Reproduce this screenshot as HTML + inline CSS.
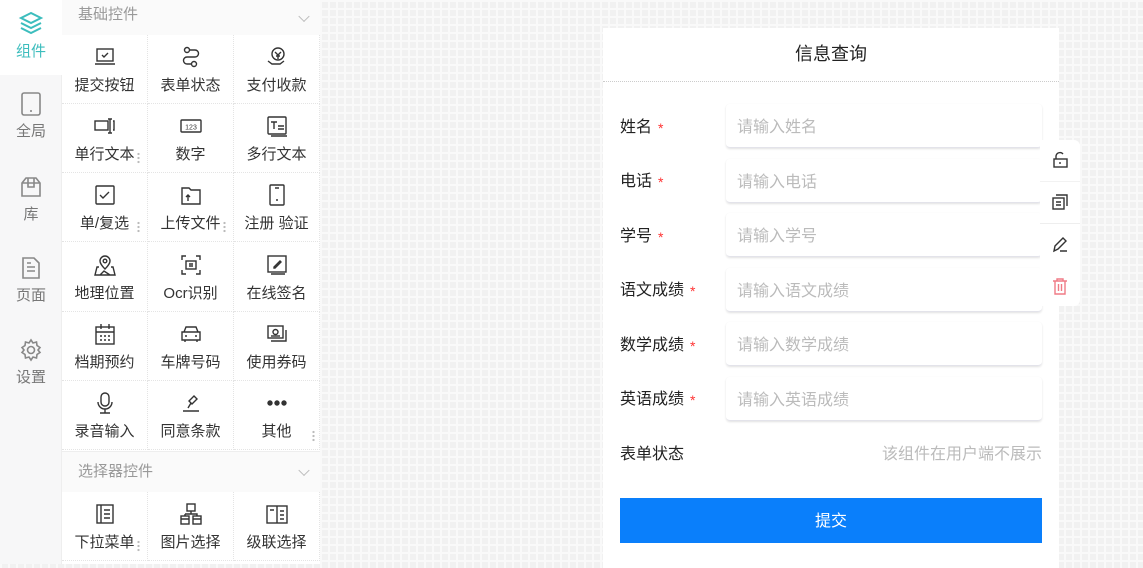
<!DOCTYPE html>
<html><head><meta charset="utf-8">
<style>
*{margin:0;padding:0;box-sizing:border-box}
body{width:1143px;height:564px;overflow:hidden;position:relative;font-family:"Liberation Sans","Noto Sans CJK SC",sans-serif;font-size:14px;color:#333;
background-color:#f1f1f1;background-image:linear-gradient(#f9f9f9 2px,transparent 2px),linear-gradient(90deg,#f9f9f9 2px,transparent 2px);background-size:8px 8px}
.rail{position:absolute;left:0;top:0;width:62px;height:564px;background:#f7f7f8;border-right:1px solid #eee}
.tab{position:absolute;left:0;width:62px;text-align:center;color:#777;font-size:15px}
.tab svg{display:block;margin:0 auto 4px}
.panel{position:absolute;left:62px;top:0;width:258px;height:564px;background:#fff}
.hd{position:absolute;left:0;width:258px;background:#fafafa;color:#999;font-size:15px;padding-left:16px}
.hd::after{content:"";position:absolute;right:12px;top:50%;width:7px;height:7px;border-right:1px solid #bbb;border-bottom:1px solid #bbb;transform:translateY(-70%) rotate(45deg)}
.cell{position:absolute;width:86px;height:69px;border-right:1px dotted #e4e4e4;border-bottom:1px dotted #e4e4e4;text-align:center}
.cell svg{position:absolute;left:32px;top:11px}
.cell span{position:absolute;left:0;right:0;top:39px;font-size:15px;color:#333}
.dots{position:absolute;width:3px;height:12px;background:radial-gradient(circle,#bbb 1px,transparent 1.3px) 0 0/3px 4px}
.card{position:absolute;left:603px;top:28px;width:456px;height:540px;background:#fff}
.title{height:54px;line-height:52px;text-align:center;font-size:18px;color:#222;border-bottom:1px dotted #ccc}
.lab{position:absolute;left:17px;font-size:16px;color:#222;line-height:20px}
.lab i{color:#f33;font-style:normal;margin-left:6px;font-size:14px;vertical-align:top}
.inp{position:absolute;left:123px;width:316px;height:44px;border-radius:4px;box-shadow:0 1px 2px rgba(0,0,0,.12);color:#bbb;padding-left:11px;line-height:48px;font-size:16px;border-bottom:1px solid #e3e3ea}
.btn{position:absolute;left:17px;top:470px;width:422px;height:45px;background:#0a7ffb;color:#fff;text-align:center;line-height:47px;font-size:16px}
.tool{position:absolute;left:1040px;top:140px;width:40px;height:166px;background:#fff;border-radius:0 6px 6px 0}
.tool svg{position:absolute;left:12px}
</style></head><body>
<div class="rail">
 <div class="tab" style="top:0;height:75px;background:#fff;color:#3cbdbd;padding-top:10px">
  <svg width="26" height="26" viewBox="0 0 26 26" fill="none" stroke="#3cbdbd" stroke-width="2"><path d="M13 3 3 8l10 5 10-5z"/><path d="M3 13l10 5 10-5"/><path d="M3 18l10 5 10-5"/></svg>组件</div>
 <div class="tab" style="top:92px"><svg width="22" height="24" viewBox="0 0 22 24" fill="none" stroke="#888" stroke-width="1.6"><rect x="2" y="1" width="18" height="22" rx="2"/><path d="M10 19h2"/></svg>全局</div>
 <div class="tab" style="top:175px"><svg width="24" height="24" viewBox="0 0 24 24" fill="none" stroke="#888" stroke-width="1.6"><path d="M3 8l4-5h10l4 5v13H3z M3 8h18 M9 3v9h6V3"/></svg>库</div>
 <div class="tab" style="top:256px"><svg width="22" height="24" viewBox="0 0 22 24" fill="none" stroke="#888" stroke-width="1.6"><path d="M3 2h11l5 5v15H3z M7 11h8M7 15h8M7 7h4"/></svg>页面</div>
 <div class="tab" style="top:338px"><svg width="24" height="24" viewBox="0 0 24 24" fill="none" stroke="#888" stroke-width="1.6"><circle cx="12" cy="12" r="3.5"/><path d="M12 2l2 3 3.5-1 .5 3.5 3 2-2 2.5 2 2.5-3 2-.5 3.5-3.5-1-2 3-2-3-3.5 1-.5-3.5-3-2 2-2.5-2-2.5 3-2L6.5 4 10 5z"/></svg>设置</div>
</div>
<div class="panel">
 <div class="hd" style="top:0;height:35px;line-height:30px">基础控件</div>
 <div class="hd" style="top:451px;height:41px;line-height:40px;border-top:1px solid #eee">选择器控件</div>
</div>
<div id="cells"></div>
<script>
var S='fill="none" stroke="#333" stroke-width="1.4"';
var ic={
a:'<rect x="3" y="3" width="16" height="12"/><path d="M1 18h20M8 9l2 2 4-4"/>',
b:'<circle cx="7" cy="4" r="2.5"/><circle cx="14" cy="18" r="2.5"/><path d="M9.5 4H15a3.5 3.5 0 010 7H7a3.5 3.5 0 000 7h4.5"/>',
c:'<circle cx="12" cy="8" r="6"/><path d="M9 6l3 3 3-3M12 9v4M10 10h4M2 15l4 3h8l4-3"/>',
d:'<rect x="1" y="6" width="13" height="9"/><path d="M16 4v14M14 4h4M14 18h4M19 6h1v9h-1"/>',
e:'<rect x="1" y="5" width="20" height="12" rx="1"/><text x="11" y="14.5" font-size="7" text-anchor="middle" fill="#333" stroke="none" font-family="Liberation Sans">123</text>',
f:'<rect x="2" y="2" width="18" height="17" rx="1"/><path d="M5 7h6M8 7v7M12 11h6M12 14h6M5 21h16"/>',
g:'<rect x="2" y="2" width="18" height="18" rx="1"/><path d="M6 11l3 3 6-6"/>',
h:'<path d="M2 4h7l2 2h9v14H2z"/><path d="M8 17v-6M6 13l2-2 2 2"/>',
i:'<rect x="4" y="1" width="14" height="20" rx="1"/><path d="M10 16h2M9 4h4"/>',
j:'<path d="M11 15s-5-5-5-8a5 5 0 0110 0c0 3-5 8-5 8z"/><circle cx="11" cy="7" r="1.8"/><path d="M5 13H3l-2 8h20l-2-8h-2M6 21l4-4 6 4"/>',
k:'<path d="M2 6V2h4M16 2h4v4M20 16v4h-4M6 20H2v-4"/><rect x="6" y="7" width="10" height="8"/><path d="M9 10h4M9 12h4"/>',
l:'<rect x="2" y="2" width="18" height="16"/><path d="M8 13l6-6 1 1-6 6H8zM5 20h14"/>',
m:'<rect x="2" y="4" width="18" height="17"/><path d="M2 9h18M7 1v5M15 1v5M6 13h2M10 13h2M14 13h2M6 17h2M10 17h2M14 17h2"/>',
n:'<path d="M4 9l2-5h10l2 5M2 9h18v8H2zM5 17v2M17 17v2M5 13h2M15 13h2"/>',
o:'<rect x="2" y="3" width="15" height="12"/><path d="M5 18h15V7"/><circle cx="9.5" cy="9" r="2.5"/><path d="M5 13h9"/>',
p:'<rect x="7" y="1" width="8" height="13" rx="4"/><path d="M4 10a7 7 0 0014 0M11 17v4M6 21h10"/>',
q:'<path d="M9 9l5-5 3 3-5 5zM11 11l-3 5M3 19h16"/>',
r:'<circle cx="4" cy="11" r="2" fill="#333"/><circle cx="11" cy="11" r="2" fill="#333"/><circle cx="18" cy="11" r="2" fill="#333"/>',
s:'<rect x="3" y="2" width="16" height="18"/><path d="M7 2v18M10 7h6M10 11h6M10 15h6"/>',
t:'<rect x="7" y="1" width="8" height="7"/><rect x="1" y="13" width="8" height="8"/><rect x="13" y="13" width="8" height="8"/><path d="M11 8v3M5 11h12v2M5 11v2M1 16h8M13 16h8"/>',
u:'<rect x="1" y="3" width="20" height="17"/><path d="M11 3v17M4 7h4M14 8h4M14 12h4M14 16h4"/>'};
var names=[['a','提交按钮'],['b','表单状态'],['c','支付收款'],['d','单行文本'],['e','数字'],['f','多行文本'],['g','单/复选'],['h','上传文件'],['i','注册 验证'],['j','地理位置'],['k','Ocr识别'],['l','在线签名'],['m','档期预约'],['n','车牌号码'],['o','使用券码'],['p','录音输入'],['q','同意条款'],['r','其他'],['s','下拉菜单'],['t','图片选择'],['u','级联选择']];
var h='';
names.forEach(function(n,k){var r=Math.floor(k/3),c=k%3;var top=r<6?35+r*69.2:492;var left=62+c*86;
h+='<div class="cell" style="left:'+left+'px;top:'+top+'px"><svg width="22" height="22" viewBox="0 0 22 22" '+S+'>'+ic[n[0]]+'</svg><span>'+n[1]+'</span></div>';});
[[137,152],[137,221],[223,221],[312,430],[137,540]].forEach(function(p){h+='<div class="dots" style="left:'+p[0]+'px;top:'+p[1]+'px"></div>';});
document.getElementById('cells').innerHTML=h;
</script>
<div class="card">
 <div class="title">信息查询</div>
 <div class="lab" style="top:90px">姓名<i>*</i></div><div class="inp" style="top:76px">请输入姓名</div>
 <div class="lab" style="top:144px">电话<i>*</i></div><div class="inp" style="top:131px">请输入电话</div>
 <div class="lab" style="top:199px">学号<i>*</i></div><div class="inp" style="top:185px">请输入学号</div>
 <div class="lab" style="top:253px">语文成绩<i>*</i></div><div class="inp" style="top:240px">请输入语文成绩</div>
 <div class="lab" style="top:308px">数学成绩<i>*</i></div><div class="inp" style="top:294px">请输入数学成绩</div>
 <div class="lab" style="top:362px">英语成绩<i>*</i></div><div class="inp" style="top:349px">请输入英语成绩</div>
 <div class="lab" style="top:417px">表单状态</div><div style="position:absolute;right:17px;top:417px;line-height:20px;color:#bbb;font-size:16px">该组件在用户端不展示</div>
 <div class="btn">提交</div>
</div>
<div class="tool">
 <svg style="top:11px" width="16" height="18" viewBox="0 0 16 18" fill="none" stroke="#333" stroke-width="1.4"><rect x="2" y="8" width="13" height="8"/><path d="M4 8V5a4 4 0 017-2M8 11v2"/></svg>
 <div style="position:absolute;left:0;right:0;top:41px;border-top:1px solid #f2f2f2"></div>
 <svg style="top:53px" width="16" height="18" viewBox="0 0 16 18" fill="none" stroke="#333" stroke-width="1.4"><rect x="1" y="5" width="11" height="11"/><path d="M4 2h11v11M4 9h5M4 12h5"/></svg>
 <div style="position:absolute;left:0;right:0;top:83px;border-top:1px solid #eee"></div>
 <svg style="top:95px" width="16" height="18" viewBox="0 0 16 18" fill="none" stroke="#333" stroke-width="1.4"><path d="M2 16l1-5 8-8 3 3-8 8zM8 16h7"/></svg>
 <svg style="top:137px" width="16" height="18" viewBox="0 0 16 18" fill="none" stroke="#f07a85" stroke-width="1.4"><path d="M1 4h14M5 4V2h6v2M3 4v13h10V4M6.5 7v7M9.5 7v7"/></svg>
</div>
</body></html>
